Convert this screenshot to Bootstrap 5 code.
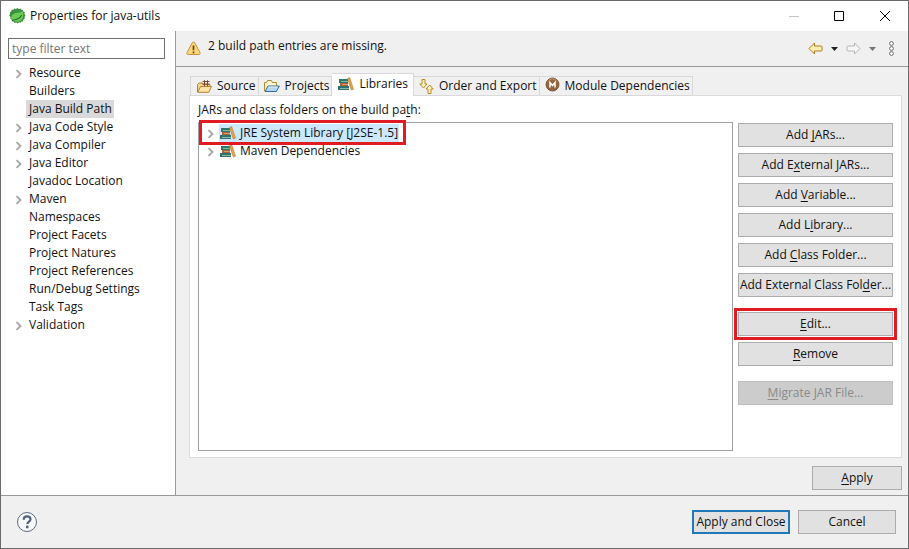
<!DOCTYPE html>
<html lang="en">
<head>
<meta charset="utf-8">
<meta name="viewport" content="width=device-width, initial-scale=1">
<title>Properties for java-utils</title>
<link href="https://cdn.jsdelivr.net/npm/bootstrap@5.3.0/dist/css/bootstrap.min.css" rel="stylesheet">
<style>
  body { font-family: "Open Sans", "Noto Sans", sans-serif; font-size: 12px; line-height: 18px; color: #111; background: #fff; }
  svg { display: block; flex: none; }
  u { text-underline-offset: 2px; }
  .dialog { border: 1px solid #6b6b6b; }
  .title-bar { height: 30px; padding: 0 17px 0 8px; }
  .title-bar h1 { font-size: 12px; line-height: 18px; }
  .window-btns { gap: 35px; }
  .plain { border: 0; background: none; padding: 0; }
  .side { width: 175px; border-right: 1px solid #9a9a9a; padding: 7px 10px 0 7px; }
  .filter { height: 21px; border: 1px solid #6f6f6f; border-radius: 0; padding: 0 3px; font-size: 12px; line-height: 18px; }
  .filter::placeholder { color: #757575; }
  .tree-list { margin: 5px 0 0; }
  .tree-list li { height: 18px; gap: 6px; padding-left: 7px; }
  .twist { width: 8px; flex: none; padding-top: 1px; }
  .node { color: #111; text-decoration: none; padding: 0 2px 0 3px; margin-left: -3px; white-space: nowrap; }
  .node.current { background: #d9d9d9; }
  .main { background: #f0f0f0; }
  .message { height: 36px; border-bottom: 1px solid #9a9a9a; padding: 0 13px 0 10px; }
  .message p { padding-bottom: 5px; margin: 0 0 0 7px; }
  .area { padding: 7px 6px 5px 13px; }
  .tab-row { padding-left: 1px; height: 22px; margin-bottom: -1px; position: relative; z-index: 1; }
  .tab-btn { height: 20px; border: 1px solid #d9d9d9; border-left-width: 0; background: #f0f0f0; padding: 0 2px 0 5px; gap: 5px; color: #111; white-space: nowrap; }
  .tab-btn:first-child { border-left-width: 1px; padding-left: 6px; }
  .tab-btn.active { height: 23px; background: #fff; border-bottom: 0; padding: 0 5px 3px 6px; }
  .pane { background: #fff; border: 1px solid #dcdcdc; padding: 5px 8px 6px 8px; }
  .pane-label { padding-bottom: 3px; }
  .split { gap: 5px; }
  .lib-list { border: 1px solid #a0a0a0; padding: 1px 0 0 8px; }
  .lib-list li { height: 18px; gap: 4px; }
  .lib { gap: 4px; height: 18px; padding: 0 1px; }
  .lib.current { background: #cce8ff; }
  .marked { position: relative; }
  .marked::after { content: ""; position: absolute; border: 3px solid #e01b24; pointer-events: none; inset: -5px -5px; }
  .lib-list .marked::after { inset: -4px -7px -3px -8px; }
  .acts { width: 155px; padding-top: 1px; gap: 6px; }
  .push { height: 24px; border: 1px solid #adadad; border-radius: 0; background: #e1e1e1; color: #111; padding: 0; font-size: 12px; line-height: 18px; white-space: nowrap; }
  .push:hover { background: #e5f1fb; border-color: #0078d7; color: #111; }
  .push:disabled { background: #ccc; border-color: #bfbfbf; color: #8a8a8a; opacity: 1; }
  .push.preset { border: 2px solid #1f78b8; }
  .space { margin-top: 9px; }
  .apply { width: 90px; }
  .foot { background: #f0f0f0; border-top: 1px solid #9a9a9a; height: 53px; padding: 0 12px 0 15px; gap: 8px; }
  .wide { width: 98px; }
</style>
</head>
<body>
<svg width="0" height="0" class="position-absolute" aria-hidden="true">
  <symbol id="chev" viewBox="0 0 8 10"><path d="M1.500 1.200 5.500 5 1.500 8.800" fill="none" stroke="#a6a6a6" stroke-width="1.800"/></symbol>
  <symbol id="books" viewBox="0 0 16 14">
    <path d="M1 2h9v4H1z" fill="#2f766c"/><path d="M3 4h7v1H3z" fill="#7fb59a"/>
    <path d="M2 6h8v3H2z" fill="#a8653c"/><path d="M4 7h6v1H4z" fill="#d39a6c"/>
    <path d="M0 9h11v4H0z" fill="#31716f"/><path d="M2 11h9v1H2z" fill="#8dbba6"/>
    <path d="m9.500 1.500 2.200-.9 3.800 11.600-2.200.8z" fill="#e3a548" stroke="#b57a2e" stroke-width=".6"/>
  </symbol>
</svg>
<div class="dialog vh-100 d-flex flex-column overflow-hidden">
  <header class="title-bar d-flex align-items-center">
    <svg width="17" height="17" viewBox="0 0 17 17" aria-hidden="true">
      <path d="m8.500 0 1.300 1 1.600-.6.9 1.300 1.700.2.200 1.600 1.600.8-.3 1.700 1 1.500-1 1.400.4 1.700-1.500.9-.2 1.700-1.700.2-.9 1.400-1.600-.5-1.400 1.100-1.400-1-1.600.5-1-1.400-1.700-.2-.2-1.700-1.500-.9.400-1.700L.1 7.500l1-1.500L.8 4.300l1.500-.8.3-1.700 1.700-.1 1-1.300 1.600.6z" fill="#3d9140"/>
      <path d="M2.300 11.500C1.500 6 6 4.900 9.600 4.700c1.700-.1 3-.5 4-1.700 1.700 5.300 0 10.700-5.200 10.700-2.300 0-3.700-.6-4.900-1.900z" fill="#6ccb55"/>
      <path d="M3 12.200c4.500-.2 7.800-1.500 9.700-5.200" fill="none" stroke="#23702f" stroke-width="1.100"/>
    </svg>
    <h1 class="m-0 ms-1 fw-normal flex-grow-1">Properties for java-utils</h1>
    <div class="window-btns d-flex align-items-center">
      <button class="plain" type="button" aria-label="Minimize" disabled><svg width="10" height="10" viewBox="0 0 10 10"><path d="M0 5.500h10" stroke="#c4c4c4"/></svg></button>
      <button class="plain" type="button" aria-label="Maximize"><svg width="10" height="10" viewBox="0 0 10 10"><path d="M.5.500h9v9h-9z" fill="none" stroke="#000"/></svg></button>
      <button class="plain" type="button" aria-label="Close"><svg width="12" height="12" viewBox="0 0 12 12"><path d="m1 1 10 10M11 1 1 11" stroke="#000"/></svg></button>
    </div>
  </header>

  <div class="d-flex flex-grow-1 overflow-hidden">
    <nav class="side flex-shrink-0" aria-label="Property pages">
      <input class="filter form-control" type="text" placeholder="type filter text" aria-label="type filter text">
      <ul class="tree-list list-unstyled">
        <li class="d-flex"><span class="twist"><svg width="8" height="18"><use href="#chev"/></svg></span><a class="node" href="#">Resource</a></li>
        <li class="d-flex"><span class="twist"></span><a class="node" href="#">Builders</a></li>
        <li class="d-flex"><span class="twist"></span><a class="node current" href="#" aria-current="page">Java Build Path</a></li>
        <li class="d-flex"><span class="twist"><svg width="8" height="18"><use href="#chev"/></svg></span><a class="node" href="#">Java Code Style</a></li>
        <li class="d-flex"><span class="twist"><svg width="8" height="18"><use href="#chev"/></svg></span><a class="node" href="#">Java Compiler</a></li>
        <li class="d-flex"><span class="twist"><svg width="8" height="18"><use href="#chev"/></svg></span><a class="node" href="#">Java Editor</a></li>
        <li class="d-flex"><span class="twist"></span><a class="node" href="#">Javadoc Location</a></li>
        <li class="d-flex"><span class="twist"><svg width="8" height="18"><use href="#chev"/></svg></span><a class="node" href="#">Maven</a></li>
        <li class="d-flex"><span class="twist"></span><a class="node" href="#">Namespaces</a></li>
        <li class="d-flex"><span class="twist"></span><a class="node" href="#">Project Facets</a></li>
        <li class="d-flex"><span class="twist"></span><a class="node" href="#">Project Natures</a></li>
        <li class="d-flex"><span class="twist"></span><a class="node" href="#">Project References</a></li>
        <li class="d-flex"><span class="twist"></span><a class="node" href="#">Run/Debug Settings</a></li>
        <li class="d-flex"><span class="twist"></span><a class="node" href="#">Task Tags</a></li>
        <li class="d-flex"><span class="twist"><svg width="8" height="18"><use href="#chev"/></svg></span><a class="node" href="#">Validation</a></li>
      </ul>
    </nav>

    <main class="main flex-grow-1 d-flex flex-column">
      <div class="message d-flex align-items-center">
        <svg width="15" height="15" viewBox="0 0 15 15" aria-hidden="true"><path d="M7.500 1c.7 0 1 .3 1.400 1l5 9.500c.6 1.300.2 2-1 2H2.100c-1.200 0-1.600-.7-1-2L6.100 2c.4-.7.7-1 1.400-1z" fill="#fbd67c" stroke="#c98f3c"/><path d="M7.500 4.500v4.700M7.500 10.500v1.700" stroke="#6b4413" stroke-width="1.700"/></svg>
        <p class="flex-grow-1">2 build path entries are missing.</p>
        <div class="d-flex align-items-center gap-2">
          <button class="plain" type="button" aria-label="Back"><svg width="15" height="13" viewBox="0 0 15 13"><path d="M1 6.500 6.500 1v3H13c.7 0 1 .3 1 1v3c0 .7-.3 1-1 1H6.500v3z" fill="#fff0b5" stroke="#b47a1c" stroke-linejoin="round"/></svg></button>
          <button class="plain" type="button" aria-label="Back history"><svg width="7" height="4" viewBox="0 0 7 4"><path d="M0 0h7L3.500 4z" fill="#222"/></svg></button>
          <button class="plain" type="button" aria-label="Forward"><svg width="15" height="13" viewBox="0 0 15 13"><path d="M14 6.500 8.500 1v3H2c-.7 0-1 .3-1 1v3c0 .7.300 1 1 1h6.500v3z" fill="#f6f6f6" stroke="#b5b5b5" stroke-linejoin="round"/></svg></button>
          <button class="plain" type="button" aria-label="Forward history"><svg width="7" height="4" viewBox="0 0 7 4"><path d="M0 0h7L3.500 4z" fill="#777"/></svg></button>
          <button class="plain ms-1" type="button" aria-label="View menu"><svg width="7" height="15" viewBox="0 0 7 15"><g fill="#fff" stroke="#6a6a6a"><circle cx="3.500" cy="2.500" r="1.900"/><circle cx="3.500" cy="7.500" r="1.900"/><circle cx="3.500" cy="12.500" r="1.900"/></g></svg></button>
        </div>
      </div>

      <div class="area flex-grow-1 d-flex flex-column">
        <div class="tab-row d-flex align-items-end" role="tablist">
          <button class="tab-btn d-flex align-items-center" type="button" role="tab" aria-selected="false">
            <svg width="15" height="13" viewBox="0 0 15 13"><path d="M.5 12V4.500L2 3h3l1 1.500h7V8" fill="#f7d793" stroke="#b57f34"/><path d="M5.500 1.500h7M5.500 4h7M7.500.2V6M10.500.2V6" stroke="#7e4a2a"/><path d="M.7 12.300 3.500 6.500h11l-2.700 5.800z" fill="#fce3a6" stroke="#b57f34"/></svg>Source</button>
          <button class="tab-btn d-flex align-items-center" type="button" role="tab" aria-selected="false">
            <svg width="16" height="14" viewBox="0 0 16 14"><path d="M.5 12V3.500h2l1-2h4l1 2h4V7" fill="#fff4cb" stroke="#b98a35"/><path d="M1 12.500 4 7h11.300l-3 5.500z" fill="#b5d5f6" stroke="#336aa5"/><path d="M4.500 8h9" stroke="#e3f2ff"/></svg>Projects</button>
          <button class="tab-btn active d-flex align-items-center" type="button" role="tab" aria-selected="true">
            <svg width="16" height="14"><use href="#books"/></svg>Libraries</button>
          <button class="tab-btn d-flex align-items-center" type="button" role="tab" aria-selected="false">
            <svg width="15" height="15" viewBox="0 0 15 15"><g fill="#fff3bf" stroke="#bd8a24" stroke-linejoin="round"><path d="M3 .5h3v4.500h2L4.500 9 .8 5H3z"/><path d="M9 14.500h3V10h2.300l-3.700-4L7 10h2z"/></g></svg>Order and Export</button>
          <button class="tab-btn d-flex align-items-center" type="button" role="tab" aria-selected="false">
            <svg class="mb-1" width="15" height="15" viewBox="0 0 15 15"><circle cx="7.500" cy="7.500" r="6.500" fill="#93653c" stroke="#6c4528" stroke-width=".8"/><path d="M3 4.500a5.200 5.200 0 0 1 9 0" fill="none" stroke="#c39c76"/><path d="M5 10.500v-5l2.500 3 2.500-3v5" fill="none" stroke="#fff" stroke-width="1.500"/></svg>Module Dependencies</button>
        </div>
        <section class="pane flex-grow-1 d-flex flex-column" role="tabpanel">
          <div class="pane-label">JARs and class folders on the build pa<u>t</u>h:</div>
          <div class="split d-flex flex-grow-1">
            <ul class="lib-list list-unstyled flex-grow-1 m-0">
              <li class="d-flex"><div class="marked d-flex"><span class="twist"><svg width="8" height="18"><use href="#chev"/></svg></span><span class="lib current d-flex align-items-center ms-1"><svg width="16" height="14"><use href="#books"/></svg>JRE System Library [J2SE-1.5]</span></div></li>
              <li class="d-flex"><span class="twist"><svg width="8" height="18"><use href="#chev"/></svg></span><span class="lib d-flex align-items-center"><svg width="16" height="14"><use href="#books"/></svg>Maven Dependencies</span></li>
            </ul>
            <div class="acts d-flex flex-column flex-shrink-0">
              <button class="push btn" type="button">Add <u>J</u>ARs...</button>
              <button class="push btn" type="button">Add E<u>x</u>ternal JARs...</button>
              <button class="push btn" type="button">Add <u>V</u>ariable...</button>
              <button class="push btn" type="button">Add L<u>i</u>brary...</button>
              <button class="push btn" type="button">Add <u>C</u>lass Folder...</button>
              <button class="push btn" type="button">Add External Class Fol<u>d</u>er...</button>
              <button class="push btn space marked" type="button"><u>E</u>dit...</button>
              <button class="push btn" type="button"><u>R</u>emove</button>
              <button class="push btn space" type="button" disabled><u>M</u>igrate JAR File...</button>
            </div>
          </div>
        </section>
        <div class="d-flex justify-content-end pt-2"><button class="push btn apply" type="button"><u>A</u>pply</button></div>
      </div>
    </main>
  </div>

  <footer class="foot d-flex align-items-center">
    <button class="plain me-auto" type="button" aria-label="Help"><svg width="22" height="22" viewBox="0 0 22 22"><circle cx="11" cy="11" r="9.500" fill="#f7f8fa" stroke="#5d6b80"/><path d="M7.700 8.700c0-2.200 1.300-3.300 3.400-3.300 2 0 3.400 1.100 3.400 2.800 0 2.300-3.200 2.400-3.200 4.900" fill="none" stroke="#53637c" stroke-width="2.200"/><circle cx="11.200" cy="16" r="1.400" fill="#53637c"/></svg></button>
    <button class="push btn preset wide" type="button">Apply and Close</button>
    <button class="push btn wide" type="button">Cancel</button>
  </footer>
</div>
<script src="https://cdn.jsdelivr.net/npm/bootstrap@5.3.0/dist/js/bootstrap.bundle.min.js"></script>
</body>
</html>
